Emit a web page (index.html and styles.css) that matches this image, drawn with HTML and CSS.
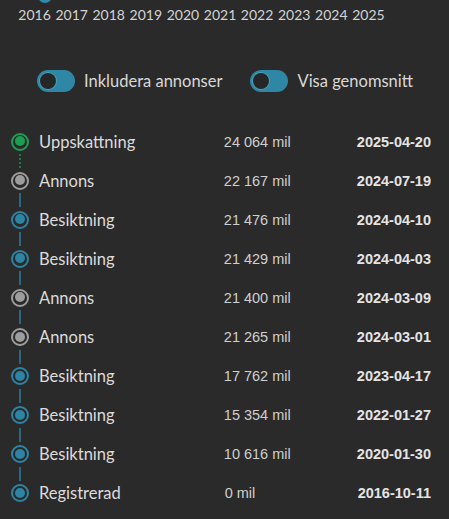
FILE: index.html
```html
<!DOCTYPE html>
<html lang="sv">
<head>
<meta charset="utf-8">
<title>Historik</title>
<link rel="stylesheet" href="styles.css">
</head>
<body>
<div class="chart">
  <span class="chart-dot"></span>
  <div class="years">
    <span>2016</span><span>2017</span><span>2018</span><span>2019</span><span>2020</span>
    <span>2021</span><span>2022</span><span>2023</span><span>2024</span><span>2025</span>
  </div>
</div>

<div class="toggles">
  <label class="toggle"><span class="switch"><span class="knob"></span></span><span class="toggle-label">Inkludera annonser</span></label>
  <label class="toggle"><span class="switch"><span class="knob"></span></span><span class="toggle-label">Visa genomsnitt</span></label>
</div>

<ul class="timeline">
  <li class="row green"><span class="marker"></span><span class="label">Uppskattning</span><span class="mil">24 064 mil</span><span class="date">2025-04-20</span></li>
  <li class="row grey after-green"><span class="marker"></span><span class="label">Annons</span><span class="mil">22 167 mil</span><span class="date">2024-07-19</span></li>
  <li class="row teal"><span class="marker"></span><span class="label">Besiktning</span><span class="mil">21 476 mil</span><span class="date">2024-04-10</span></li>
  <li class="row teal"><span class="marker"></span><span class="label">Besiktning</span><span class="mil">21 429 mil</span><span class="date">2024-04-03</span></li>
  <li class="row grey"><span class="marker"></span><span class="label">Annons</span><span class="mil">21 400 mil</span><span class="date">2024-03-09</span></li>
  <li class="row grey"><span class="marker"></span><span class="label">Annons</span><span class="mil">21 265 mil</span><span class="date">2024-03-01</span></li>
  <li class="row teal"><span class="marker"></span><span class="label">Besiktning</span><span class="mil">17 762 mil</span><span class="date">2023-04-17</span></li>
  <li class="row teal"><span class="marker"></span><span class="label">Besiktning</span><span class="mil">15 354 mil</span><span class="date">2022-01-27</span></li>
  <li class="row teal"><span class="marker"></span><span class="label">Besiktning</span><span class="mil">10 616 mil</span><span class="date">2020-01-30</span></li>
  <li class="row teal"><span class="marker"></span><span class="label">Registrerad</span><span class="mil">0 mil</span><span class="date">2016-10-11</span></li>
</ul>
</body>
</html>
```
FILE: styles.css
```css
* { box-sizing: border-box; }
html, body {
  margin: 0;
  padding: 0;
  background: #2a2a2a;
  color: #dcdcdc;
  font-family: "Lato", "Open Sans", sans-serif;
  overflow: hidden;
}
body { width: 449px; height: 519px; }

.chart {
  position: relative;
  padding-top: 5px;
  padding-left: 16px;
}
.chart-dot {
  position: absolute;
  left: 38px;
  top: -11px;
  width: 14px;
  height: 14px;
  border-radius: 50%;
  background: #2f8aa8;
}
.years {
  display: flex;
  font-size: 14px;
  line-height: 20px;
  color: #d4d4d4;
}
.years span {
  width: 37.1px;
  text-align: center;
}

.toggles {
  display: flex;
  margin-top: 44px;
  padding-left: 37px;
  height: 24px;
  align-items: center;
}
.toggle {
  display: flex;
  align-items: center;
  gap: 9px;
}
.toggle + .toggle { margin-left: 28px; }
.switch {
  position: relative;
  display: block;
  width: 38px;
  height: 22px;
  border-radius: 11px;
  background: #2f87a6;
}
.knob {
  position: absolute;
  left: 3px;
  top: 3px;
  width: 16px;
  height: 16px;
  border-radius: 50%;
  background: #262626;
  box-shadow: 0 0 0 1px #4b9dba;
}
.toggle-label {
  font-size: 16.5px;
  color: #d8d8d8;
  line-height: 24px;
}

.timeline {
  list-style: none;
  margin: 29px 0 0 0;
  padding: 0 18px 0 11px;
}
.row {
  position: relative;
  display: grid;
  grid-template-columns: 18px 1fr 123px auto;
  column-gap: 10px;
  align-items: center;
  height: 39.1px;
}
.marker {
  position: relative;
  width: 18px;
  height: 18px;
  border-radius: 50%;
  border: 2.5px solid currentColor;
}
.marker::after {
  content: "";
  position: absolute;
  left: 1.5px;
  top: 1.5px;
  width: 10px;
  height: 10px;
  border-radius: 50%;
  background: currentColor;
}
.green .marker { color: #1c9f52; }
.grey .marker { color: #9d9d9d; }
.teal .marker { color: #2d84a4; }

.row + .row::before {
  content: "";
  position: absolute;
  left: 8px;
  top: -7px;
  width: 2px;
  height: 14px;
  background: #2b6880;
}
.row.after-green::before {
  background: repeating-linear-gradient(to bottom, #1d7a45 0 2px, transparent 2px 4px);
}

.label {
  font-size: 16.5px;
  color: #dcdcdc;
}
.mil {
  font-family: "Liberation Sans", Arial, sans-serif;
  font-size: 14.5px;
  color: #cfcfcf;
}
.date {
  font-family: "Liberation Sans", Arial, sans-serif;
  font-weight: bold;
  font-size: 14.5px;
  color: #e4e4e4;
  text-align: right;
}
```
